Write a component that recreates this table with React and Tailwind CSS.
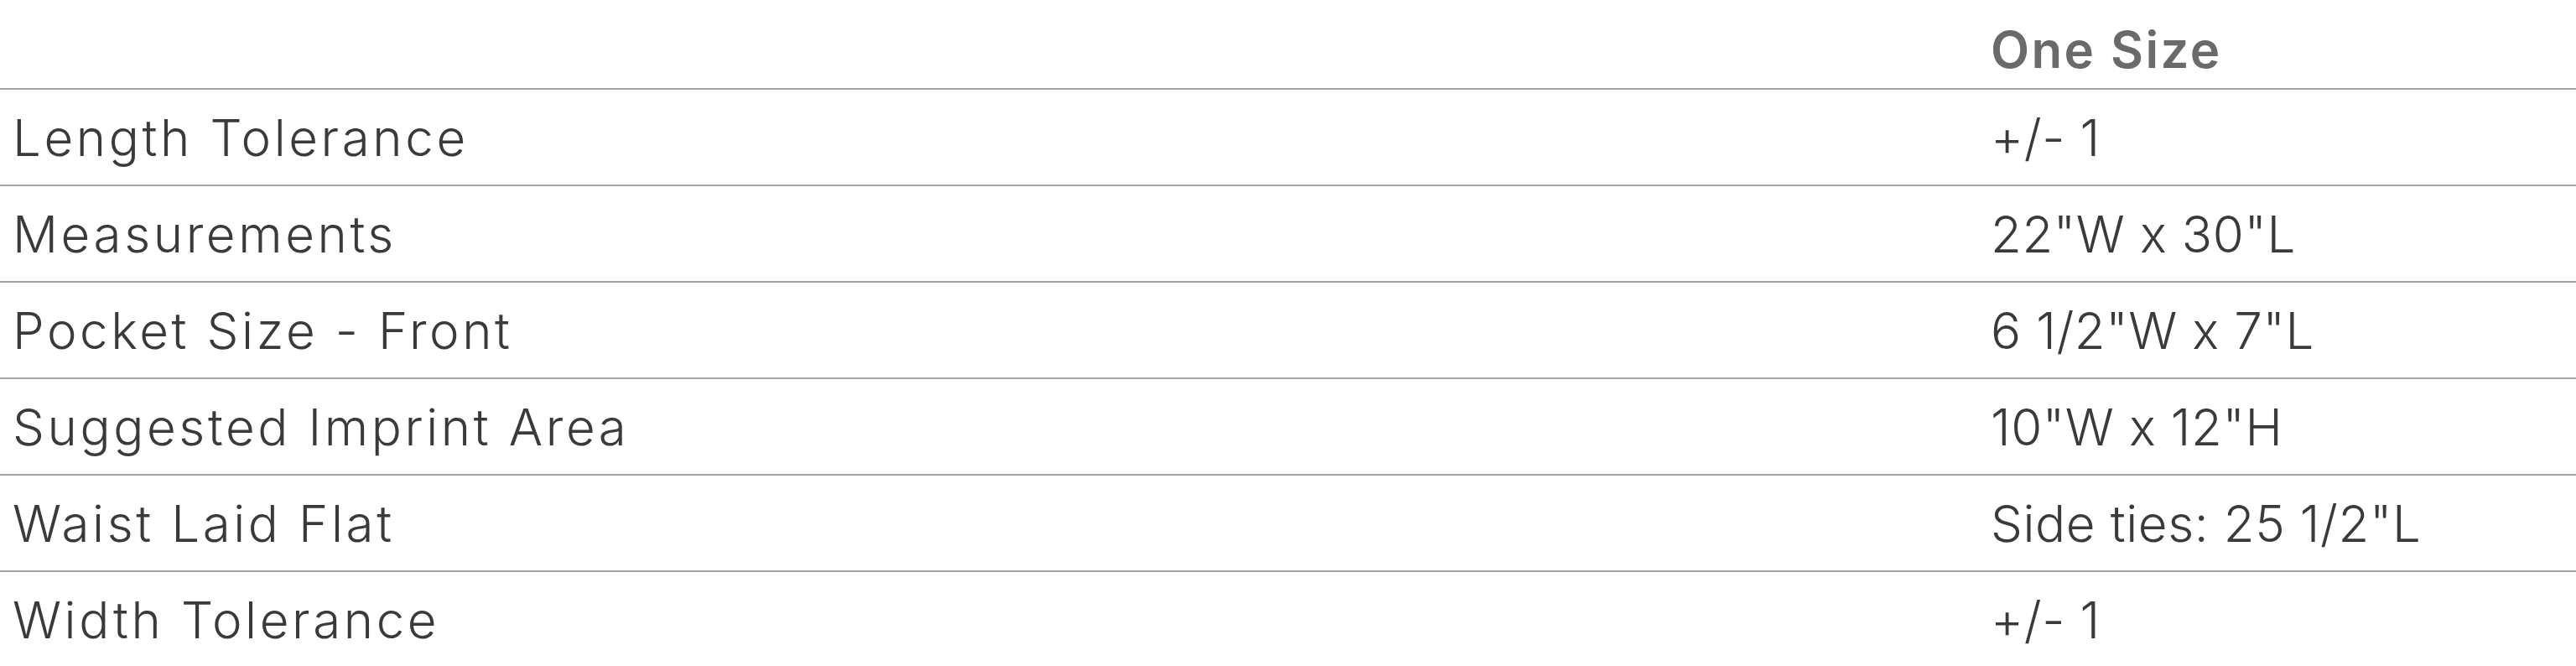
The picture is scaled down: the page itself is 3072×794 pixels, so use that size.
import React from 'react';

const rows = [
    { label: 'Length Tolerance', value: '+/- 1' },
    { label: 'Measurements', value: '22"W x 30"L' },
    { label: 'Pocket Size - Front', value: '6 1/2"W x 7"L' },
    { label: 'Suggested Imprint Area', value: '10"W x 12"H' },
    { label: 'Waist Laid Flat', value: 'Side ties: 25 1/2"L' },
    { label: 'Width Tolerance', value: '+/- 1' },
];

export default function App() {
    return (
        <div className="w-[3072px] h-[794px] overflow-hidden bg-white font-['Inter',sans-serif] font-[350] text-[60px] tracking-[0.01em] text-[#3a3a3a]">
            <div className="grid grid-cols-[2361px_1fr] h-[107px] border-b-2 border-[#a3a3a3]">
                <div />
                <div className="flex items-center pt-3 px-[13px] font-semibold tracking-[0.04em] text-[#6a6a6a]">One Size</div>
            </div>
            {rows.map((row) => (
                <div key={row.label} className="grid grid-cols-[2361px_1fr] h-[115px] border-b-2 border-[#a3a3a3]">
                    <div className="flex items-center px-[15px] tracking-[0.06em]">{row.label}</div>
                    <div className="flex items-center px-[13px]">{row.value}</div>
                </div>
            ))}
        </div>
    );
}
